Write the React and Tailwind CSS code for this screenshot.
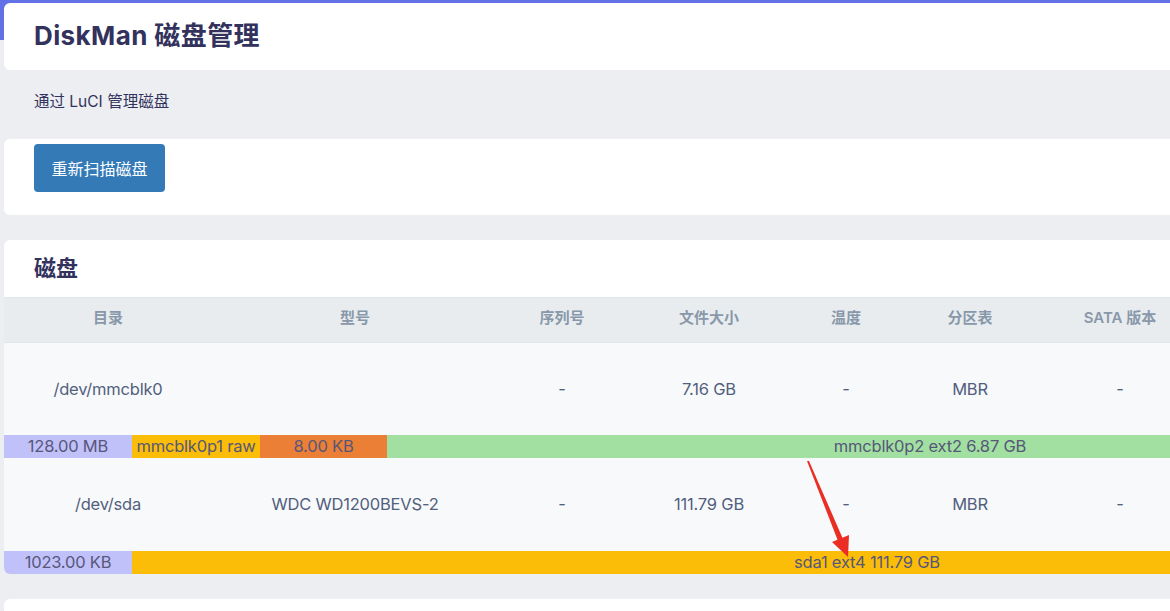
import React from "react";

const font = { fontFamily: "Inter, 'Noto Sans CJK SC', sans-serif" };

const cols = "grid grid-cols-[208px_286px_128px_166px_108px_140px_160px_1fr]";

const headers = ["目录", "型号", "序列号", "文件大小", "温度", "分区表", "SATA 版本", ""];

const disks = [
  {
    rowH: "h-[92px]",
    cells: ["/dev/mmcblk0", "", "-", "7.16 GB", "-", "MBR", "-", ""],
    parts: [
      { label: "128.00 MB", cls: "w-[128px] bg-[#c1c1fa]" },
      { label: "mmcblk0p1 raw", cls: "w-[128px] bg-[#fbbd08]" },
      { label: "8.00 KB", cls: "w-[127px] bg-[#ec7f36]" },
      { label: "mmcblk0p2 ext2 6.87 GB", cls: "w-[1086px] bg-[#a1e0a1]" },
    ],
  },
  {
    rowH: "h-[93px]",
    cells: ["/dev/sda", "WDC WD1200BEVS-2", "-", "111.79 GB", "-", "MBR", "-", ""],
    parts: [
      { label: "1023.00 KB", cls: "w-[128px] bg-[#c1c1fa]" },
      { label: "sda1 ext4 111.79 GB", cls: "w-[1470px] bg-[#fbbd08]" },
    ],
  },
];

export default function App() {
  return (
    <div
      style={font}
      className="relative h-[611px] w-[1170px] overflow-hidden bg-[linear-gradient(#6272e6_0px,#6272e6_40px,#eceef1_40px)]"
    >
      <div className="w-[1700px] pl-1 pt-[3px]">
        {/* Title card */}
        <div className="flex h-[67px] items-center rounded-md bg-white px-[30px] pb-[2px]">
          <h1 className="text-[26px] font-bold tracking-[0.4px] text-[#32325d]">DiskMan 磁盘管理</h1>
        </div>

        <div className="flex h-[64px] items-center bg-[#eceef1] px-[30px] text-[15.5px] text-[#32325d]">
          通过 LuCI 管理磁盘
        </div>

        {/* Rescan card */}
        <div className="mt-[5px] h-[76px] rounded-md bg-white px-[30px] pt-[5px]">
          <button
            style={{ fontFamily: "'Noto Sans CJK SC', sans-serif" }}
            className="h-[48px] w-[131px] rounded bg-[#337ab7] text-[16px] text-white"
          >
            重新扫描磁盘
          </button>
        </div>

        <div className="h-[25px] bg-[#eceef1]" />

        {/* Disk card */}
        <div className="overflow-hidden rounded-md bg-white">
          <div className="flex h-[57px] items-center px-[30px]">
            <h2 className="text-[22px] font-bold text-[#32325d]">磁盘</h2>
          </div>
          <div className={`${cols} h-[46px] items-center border-y border-[#e3e6ea] bg-[#e9ecef] pb-[3px] text-[15px] font-semibold text-[#8898aa]`}>
            {headers.map((h, i) => (
              <div key={i} className="text-center">{h}</div>
            ))}
          </div>
          {disks.map((d, i) => (
            <div key={i}>
              <div className={`${cols} ${d.rowH} items-center bg-[#f8f9fa] text-[16.5px] tracking-[-0.2px] text-[#525f7f]`}>
                {d.cells.map((c, j) => (
                  <div key={j} className="text-center">{c}</div>
                ))}
              </div>
              <div className="flex h-[23px] text-[16.5px] tracking-[-0.2px] text-[#57577a]">
                {d.parts.map((p, j) => (
                  <div key={j} className={`flex shrink-0 items-center justify-center whitespace-nowrap ${p.cls}`}>
                    {p.label}
                  </div>
                ))}
              </div>
            </div>
          ))}
        </div>

        <div className="h-[25px] bg-[#eceef1]" />

        <div className="h-[40px] rounded-md bg-white" />
      </div>

      {/* red annotation arrow */}
      <svg className="pointer-events-none absolute left-0 top-0" width="1170" height="611">
        <polygon points="807,461 809,461 843,539 838,541" fill="#ea2e24" />
        <polygon points="848,557 832,542 849,535" fill="#ea2e24" />
      </svg>
    </div>
  );
}
